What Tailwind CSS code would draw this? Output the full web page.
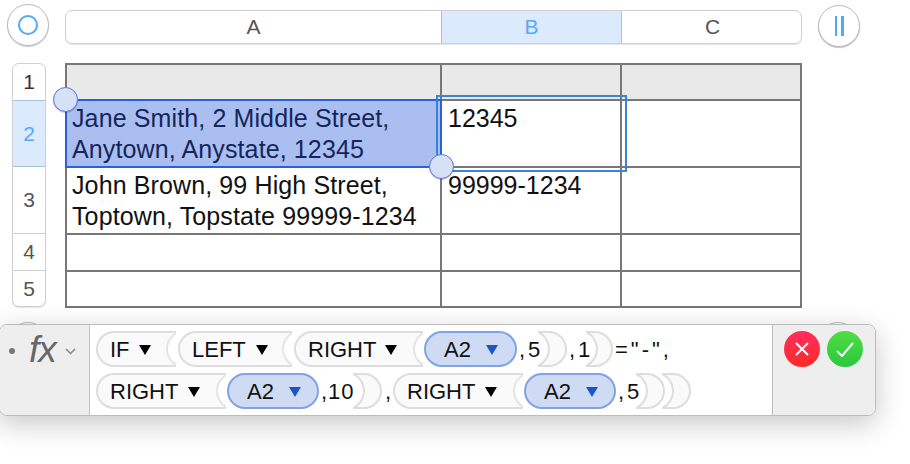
<!DOCTYPE html>
<html>
<head>
<meta charset="utf-8">
<script src="https://cdn.jsdelivr.net/npm/@tailwindcss/browser@4"></script>
</head>
<body class="bg-white font-['Liberation_Sans',sans-serif]">
<div class="relative w-[910px] h-[464px] overflow-hidden bg-white">
  <!-- top controls -->
  <div class="flex items-center h-[50px] pl-[7px]">
    <div class="w-[42px] h-[42px] rounded-full border border-[#bbb] bg-white shadow-[0_1px_1px_rgba(0,0,0,0.2)] flex items-center justify-center">
      <div class="w-[20px] h-[20px] rounded-full border-2 border-[#4fa9f7]"></div>
    </div>
    <div class="ml-[16px] w-[737px] h-[34px] mt-[4px] grid grid-cols-[375px_181px_181px] rounded-[7px] border border-[#cfcfcf] shadow-[0_1px_1px_rgba(0,0,0,0.1)] text-[21px] text-[#555] overflow-hidden">
      <div class="flex items-center justify-center">A</div>
      <div class="flex items-center justify-center bg-[#dbeafc] border-x border-[#a9c1dd] text-[#55a8fa]">B</div>
      <div class="flex items-center justify-center">C</div>
    </div>
    <div class="ml-[16px] mt-[2px] w-[42px] h-[42px] rounded-full border border-[#bbb] bg-white shadow-[0_1px_1px_rgba(0,0,0,0.25)] flex items-center justify-center gap-[4px]">
      <div class="w-[2.5px] h-[20px] bg-[#4fa9f7]"></div>
      <div class="w-[2.5px] h-[20px] bg-[#4fa9f7]"></div>
    </div>
  </div>

  <!-- sheet -->
  <div class="flex mt-[13px] pl-[12px]">
    <div class="w-[34px] h-[244px] rounded-[7px] border border-[#cfcfcf] shadow-[0_1px_1px_rgba(0,0,0,0.1)] overflow-hidden flex flex-col text-[21px] text-[#555] bg-white">
      <div class="h-[36px] flex items-center justify-center text-[#333]">1</div>
      <div class="h-[67px] flex items-center justify-center bg-[#dbeafc] border-y border-[#a9c1dd] text-[#55a8fa]">2</div>
      <div class="h-[67px] flex items-center justify-center border-b border-[#d0d0d0]">3</div>
      <div class="h-[37px] flex items-center justify-center border-b border-[#d0d0d0]">4</div>
      <div class="flex-1 flex items-center justify-center">5</div>
    </div>
    <div class="relative ml-[19px] w-[737px] border-l-2 border-t-2 border-[#777] text-[25px] leading-[31px] text-[#111]">
      <div class="grid grid-cols-[375px_180px_180px] grid-rows-[36px_67px_67px_37px_36px] [&>div]:border-r-2 [&>div]:border-b-2 [&>div]:border-[#777]">
        <div class="bg-[#e9e9e9]"></div><div class="bg-[#e9e9e9]"></div><div class="bg-[#e9e9e9]"></div>
        <div class="bg-[#aabfef] text-[#14265c] pl-[5px] pt-[2px] whitespace-nowrap tracking-[0.12px]">Jane Smith, 2 Middle Street,<br>Anytown, Anystate, 12345</div>
        <div class="pl-[6px] pt-[2px]">12345</div><div></div>
        <div class="pl-[5px] pt-[2px] whitespace-nowrap tracking-[0.12px]">John Brown, 99 High Street,<br>Toptown, Topstate 99999-1234</div>
        <div class="pl-[6px] pt-[2px]">99999-1234</div><div></div>
        <div></div><div></div><div></div>
        <div></div><div></div><div></div>
      </div>
      <!-- selection overlays -->
      <div class="absolute left-[-2px] top-[34px] w-[377px] h-[69px] border-2 border-[#2a60d9]"></div>
      <div class="absolute left-[369px] top-[30px] w-[191px] h-[77px] border-2 border-[#3a84d6]"></div>
      <div class="absolute left-[-14px] top-[22px] w-[25px] h-[25px] rounded-full bg-[#d6e1f6] border-[1.5px] border-[#5f72ea] shadow-[0_1px_1px_rgba(0,0,0,0.2)]"></div>
      <div class="absolute left-[362px] top-[89px] w-[25px] h-[25px] rounded-full bg-[#d6e1f6] border-[1.5px] border-[#5f72ea] shadow-[0_1px_1px_rgba(0,0,0,0.2)]"></div>
    </div>
  </div>

  <!-- circles peeking out behind the formula bar -->
  <div class="absolute left-[7px] top-[322px] w-[42px] h-[42px] rounded-full border border-[#bbb] bg-white"></div>
  <div class="absolute left-[817px] top-[322px] w-[42px] h-[42px] rounded-full border border-[#bbb] bg-white"></div>

  <!-- formula bar -->
  <div class="relative z-10 mt-[16px] ml-[-1px] w-[877px] h-[92px] flex rounded-[8px] border border-[#bdbdbd] bg-white shadow-[0_8px_28px_rgba(0,0,0,0.22)] overflow-hidden">
    <div class="w-[90px] shrink-0 bg-[#eeeeee] border-r border-[#c4c4c4] flex items-start pt-[6px] pl-[9px]">
      <div class="w-[6px] h-[6px] rounded-full bg-[#777] mt-[17px]"></div>
      <div class="ml-[14px] text-[37px] leading-[38px] italic text-[#666] tracking-[-1px]">fx</div>
      <svg class="ml-[9px] mt-[17px]" width="11" height="7" viewBox="0 0 11 7" fill="none" stroke="#888" stroke-width="1.5"><path d="M1 1l4.500 4.500L10 1"/></svg>
    </div>
    <div class="flex-1 flex flex-col gap-[6px] pt-[6px] pl-[6px] text-[22px] leading-none text-[#111]">
      <!-- row 1 -->
      <div class="flex items-center h-[36px]">
        <div class="relative overflow-hidden w-[80px] h-[36px] rounded-l-[18px] border-2 border-r-0 border-[#dddddd] bg-[#fafafa] flex items-center gap-[9px] pl-[12px] pt-[2px] mr-[2px]">IF
          <svg width="12" height="10" viewBox="0 0 12 10"><path d="M0 0h12l-6 10z" fill="#000"/></svg>
          <div class="absolute right-[-28px] top-[-3px] w-[38px] h-[38px] rounded-full bg-white border-2 border-[#e4e4e4]"></div>
        </div>
        <div class="relative overflow-hidden w-[114px] h-[36px] rounded-l-[18px] border-2 border-r-0 border-[#dddddd] bg-[#fafafa] flex items-center gap-[10px] pl-[12px] pt-[2px] mr-[2px]">LEFT
          <svg width="12" height="10" viewBox="0 0 12 10"><path d="M0 0h12l-6 10z" fill="#000"/></svg>
          <div class="absolute right-[-28px] top-[-3px] w-[38px] h-[38px] rounded-full bg-white border-2 border-[#e4e4e4]"></div>
        </div>
        <div class="relative overflow-hidden w-[129px] h-[36px] rounded-l-[18px] border-2 border-r-0 border-[#dddddd] bg-[#fafafa] flex items-center gap-[9px] pl-[12px] pt-[2px] mr-[1px]">RIGHT
          <svg width="12" height="10" viewBox="0 0 12 10"><path d="M0 0h12l-6 10z" fill="#000"/></svg>
          <div class="absolute right-[-28px] top-[-3px] w-[38px] h-[38px] rounded-full bg-white border-2 border-[#e4e4e4]"></div>
        </div>
        <div class="w-[93px] h-[36px] rounded-[18px] border-2 border-[#7fa3e8] bg-[#cfdbf3] flex items-center gap-[15px] pl-[18px] pt-[2px]">A2
          <svg width="12" height="10" viewBox="0 0 12 10"><path d="M0 0h12l-6 10z" fill="#1d55c8"/></svg>
        </div>
        <div class="w-[21px] tracking-[3px] pl-[2px] pt-[2px]">,5</div>
        <svg width="30" height="36" viewBox="0 0 30 36"><path d="M0 1H11A17 17 0 0 1 11 35H0A18.600 18.600 0 0 0 0 1Z" fill="#fafafa" stroke="#dddddd" stroke-width="2"/></svg>
        <div class="w-[18px] tracking-[3px] pl-[1px] pt-[2px]">,1</div>
        <svg width="28" height="36" viewBox="0 0 28 36"><path d="M0 1H9A17 17 0 0 1 9 35H0A18.600 18.600 0 0 0 0 1Z" fill="#fafafa" stroke="#dddddd" stroke-width="2"/></svg>
        <div class="tracking-[3px] ml-[1px] pt-[2px] whitespace-pre">="-",</div>
      </div>
      <!-- row 2 -->
      <div class="flex items-center h-[36px]">
        <div class="relative overflow-hidden w-[130px] h-[36px] rounded-l-[18px] border-2 border-r-0 border-[#dddddd] bg-[#fafafa] flex items-center gap-[10px] pl-[12px] pt-[2px] mr-[1px]">RIGHT
          <svg width="12" height="10" viewBox="0 0 12 10"><path d="M0 0h12l-6 10z" fill="#000"/></svg>
          <div class="absolute right-[-28px] top-[-3px] w-[38px] h-[38px] rounded-full bg-white border-2 border-[#e4e4e4]"></div>
        </div>
        <div class="w-[92px] h-[36px] rounded-[18px] border-2 border-[#7fa3e8] bg-[#cfdbf3] flex items-center gap-[15px] pl-[18px] pt-[2px]">A2
          <svg width="12" height="10" viewBox="0 0 12 10"><path d="M0 0h12l-6 10z" fill="#1d55c8"/></svg>
        </div>
        <div class="w-[34px] pl-[2px] pt-[2px] tracking-[1px]">,10</div>
        <svg width="30" height="36" viewBox="0 0 30 36"><path d="M0 1H11A17 17 0 0 1 11 35H0A18.600 18.600 0 0 0 0 1Z" fill="#fafafa" stroke="#dddddd" stroke-width="2"/></svg>
        <div class="w-[10px] pl-[2px] pt-[2px]">,</div>
        <div class="relative overflow-hidden w-[130px] h-[36px] rounded-l-[18px] border-2 border-r-0 border-[#dddddd] bg-[#fafafa] flex items-center gap-[10px] pl-[12px] pt-[2px] mr-[1px]">RIGHT
          <svg width="12" height="10" viewBox="0 0 12 10"><path d="M0 0h12l-6 10z" fill="#000"/></svg>
          <div class="absolute right-[-28px] top-[-3px] w-[38px] h-[38px] rounded-full bg-white border-2 border-[#e4e4e4]"></div>
        </div>
        <div class="w-[92px] h-[36px] rounded-[18px] border-2 border-[#7fa3e8] bg-[#cfdbf3] flex items-center gap-[15px] pl-[18px] pt-[2px]">A2
          <svg width="12" height="10" viewBox="0 0 12 10"><path d="M0 0h12l-6 10z" fill="#1d55c8"/></svg>
        </div>
        <div class="w-[20px] pl-[2px] pt-[2px] tracking-[3px]">,5</div>
        <svg width="30" height="36" viewBox="0 0 30 36"><path d="M0 1H11A17 17 0 0 1 11 35H0A18.600 18.600 0 0 0 0 1Z" fill="#fafafa" stroke="#dddddd" stroke-width="2"/></svg>
        <svg class="ml-[-4px]" width="30" height="36" viewBox="0 0 30 36"><path d="M0 1H11A17 17 0 0 1 11 35H0A18.600 18.600 0 0 0 0 1Z" fill="#fafafa" stroke="#dddddd" stroke-width="2"/></svg>
      </div>
    </div>
    <div class="w-[103px] shrink-0 bg-[#eeeeee] border-l border-[#bdbdbd] flex items-start gap-[7px] pt-[6px] pl-[11px]">
      <div class="w-[36px] h-[36px] rounded-full bg-linear-to-b from-[#ff2d5c] to-[#ff2a22] flex items-center justify-center">
        <svg width="16" height="16" viewBox="0 0 16 16" stroke="#fff" stroke-width="2" fill="none"><path d="M2 2l12 12M14 2L2 14"/></svg>
      </div>
      <div class="w-[36px] h-[36px] rounded-full bg-linear-to-b from-[#4fdd43] to-[#27c93f] flex items-center justify-center">
        <svg width="20" height="16" viewBox="0 0 20 16" stroke="#fff" stroke-width="2" fill="none"><path d="M2 10l5 5L18 2"/></svg>
      </div>
    </div>
  </div>
</div>
</body>
</html>
